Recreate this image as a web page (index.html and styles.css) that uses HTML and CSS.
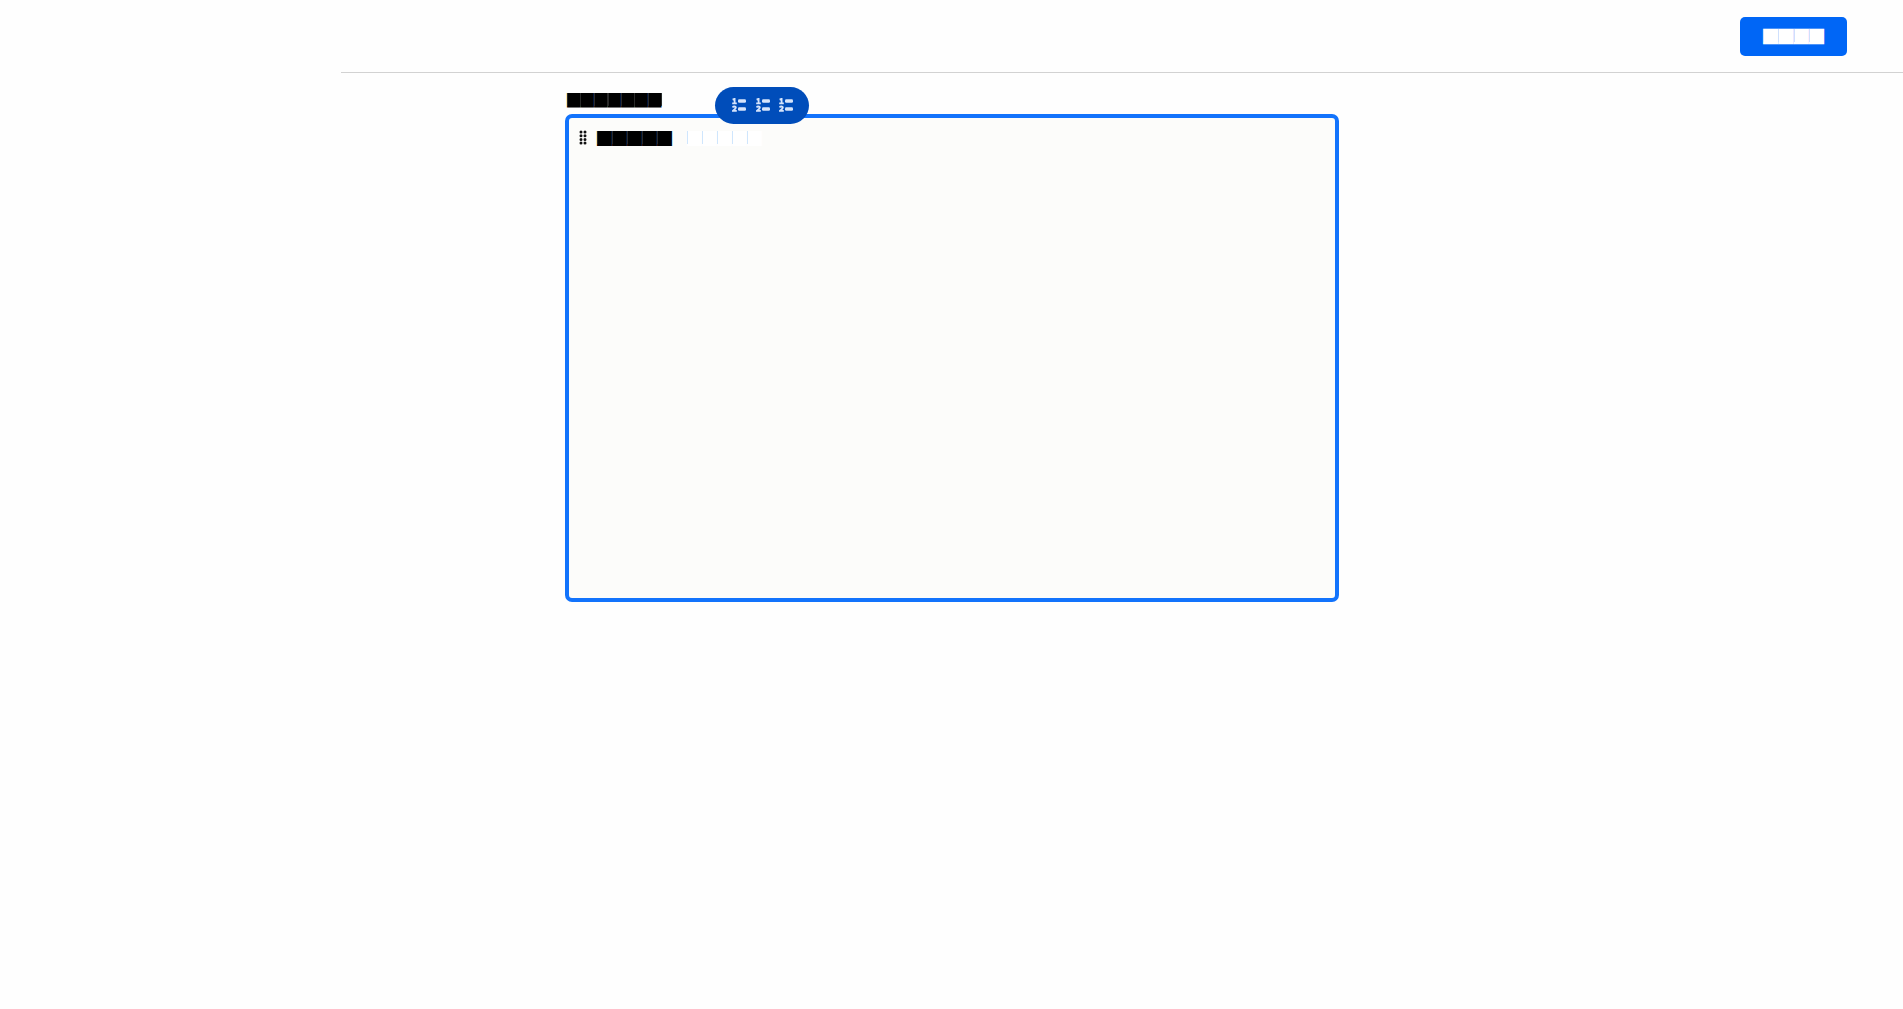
FILE: index.html
```
<!DOCTYPE html>
<html lang="en">
<head>
<meta charset="utf-8">
<title>Editor</title>
<link rel="stylesheet" href="styles.css">
</head>
<body>
<svg class="defs" width="0" height="0" aria-hidden="true">
  <symbol id="numbered" viewBox="0 0 14 14">
    <path d="M.6 1.6 2.6.8V5.4M.2 5.4H4.8M.6 9.4Q1 8.5 2.4 8.5 4 8.5 3.8 9.8 3.6 10.8 1 12.8H4.8" fill="none" stroke="#d6e4fb" stroke-width="1.8"/>
    <rect x="6" y="1.2" width="8" height="3.6" rx="1.3" fill="#d6e4fb"/>
    <rect x="6" y="9.2" width="8" height="3.6" rx="1.3" fill="#d6e4fb"/>
  </symbol>
</svg>
<header class="topbar"><button class="save"><span class="cells">████</span></button></header>
<main class="content">
  <div class="label"><span class="cells">███████</span></div>
  <section class="editor">
    <div class="toolbar">
      <svg class="tool"><use href="#numbered"/></svg>
      <svg class="tool"><use href="#numbered"/></svg>
      <svg class="tool"><use href="#numbered"/></svg>
    </div>
    <div class="row">
      <svg class="grip" width="8" height="15" viewBox="0 0 8 15"><path d="M2 2h0M6 2h0M2 5.7h0M6 5.7h0M2 9.4h0M6 9.4h0M2 13h0M6 13h0" stroke="#111" stroke-width="3" stroke-linecap="round"/></svg>
      <span class="cells term">█████</span>
      <span class="cells value">█████</span>
    </div>
  </section>
</main>
</body>
</html>
```
FILE: styles.css
```
* { box-sizing: border-box; }
body { margin: 0; background: #fefefe; font: 15px/15px "Noto Sans CJK JP", sans-serif; }
.defs { position: absolute; }
.topbar { height: 73px; margin-left: 341px; padding: 17px 56px 0 0; border-bottom: 1px solid #d2d2d2; display: flex; justify-content: flex-end; align-items: flex-start; }
.save { width: 107px; height: 39px; padding: 0 0 3px; border: 0; border-radius: 5px; background: #0066f6; color: #fff; font: inherit; font-size: 15.3px; --seam: #cfe0fd; --cell: 15.3px; }
.cells { position: relative; display: inline-block; }
.cells::after { content: ""; position: absolute; inset: 1px 0; background: repeating-linear-gradient(90deg, var(--seam) 0 1px, transparent 1px var(--cell)); }
.content { width: 774px; margin-left: 565px; padding-top: 19px; }
.label { height: 22px; padding-left: 2px; font-size: 13.5px; color: #000; --seam: #2a2a2a; --cell: 13.5px; }
.label .cells { transform: translateY(0.5px) scaleY(1.07); }
.label .cells::after { inset: 1px 0 2px; }
.editor { position: relative; height: 488px; border: 4px solid #1273fc; border-radius: 7px; background: #fcfcfa; padding: 12px 0 0 9px; }
.toolbar { position: absolute; left: 146px; top: -31px; width: 94px; height: 37px; padding: 11px 16px 0 17px; border-radius: 19px; background: #004dba; display: flex; justify-content: space-between; }
.tool { width: 14px; height: 14px; }
.row { display: flex; height: 15px; }
.grip { margin: 0 10px 0 1px; }
.term { color: #000; margin-right: 15px; --seam: #2a2a2a; --cell: 15px; }
.value { color: #fff; --seam: #cfe6fd; --cell: 15px; }
```
